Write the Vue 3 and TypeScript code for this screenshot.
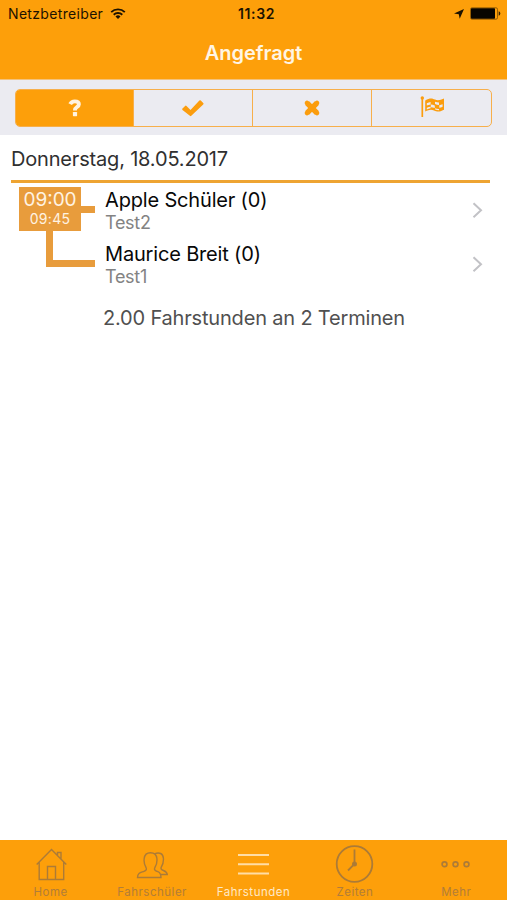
<script setup lang="ts">
interface Lesson {
  name: string
  place: string
}

const lessons: Lesson[] = [
  { name: 'Apple Schüler (0)', place: 'Test2' },
  { name: 'Maurice Breit (0)', place: 'Test1' },
]
</script>

<template>
  <div class="screen">
    <header class="top">
      <div class="status">
        <div class="carrier">
          <span class="carrier-name">Netzbetreiber</span>
          <svg class="wifi" width="16" height="12" viewBox="0 0 16 12">
            <path d="M1.2 4.1a9.8 9.8 0 0 1 13.6 0M3.7 6.7a6.3 6.3 0 0 1 8.6 0" fill="none" stroke="#1c1200" stroke-width="1.9" />
            <path d="M5.5 8.500a3.700 3.700 0 0 1 5 0L8 11.100z" fill="#1c1200" />
          </svg>
        </div>
        <span class="clock">11:32</span>
        <div class="indicators">
          <svg width="12" height="12" viewBox="0 0 12 12"><path d="M11 1 6.7 10.7 5.8 6.2 1 5.6z" fill="#1c1200" /></svg>
          <svg class="battery" width="31" height="13" viewBox="0 0 31 13">
            <rect x=".5" y=".8" width="27" height="11.4" rx="1.5" fill="none" stroke="#6b4300" stroke-width=".7" />
            <rect x="1" y="1.2" width="24" height="10.6" rx=".8" fill="#080500" />
            <path d="M28.7 4.2q1.6.5 1.6 2.3t-1.6 2.3z" fill="#3a2500" />
          </svg>
        </div>
      </div>
      <h1 class="title">Angefragt</h1>
    </header>

    <div class="filter">
      <div class="segments">
        <button class="segment active">
          <svg width="14" height="20" viewBox="0 0 14 20">
            <path d="M2.200 6.100C3 4.400 4.600 3.400 6.800 3.400c2.500 0 4.100 1.100 4.100 2.900 0 2.800-3.900 2.700-3.900 5.700v.6" fill="none" stroke="#fff3e0" stroke-width="3.900" />
            <rect x="4.900" y="14" width="4.200" height="4.200" rx=".6" fill="#fff3e0" />
          </svg>
        </button>
        <button class="segment">
          <svg width="22" height="18" viewBox="0 0 22 18"><path d="m.5 9.6 2.6-2.7q.7-.7 1.4 0l4 4L17.4 1.6q.7-.7 1.4 0l2.4 2.5q.7.7 0 1.4L9.3 16.8q-.7.7-1.4 0L.5 11q-.6-.7 0-1.4z" fill="#fb9d0e" /></svg>
        </button>
        <button class="segment">
          <svg width="18" height="18" viewBox="0 0 18 18"><path d="M4.200 4.200l9.600 9.600m0-9.600-9.600 9.600" stroke="#fb9d0e" stroke-width="5.400" /><path d="M4 4l10 10M14 4 4 14" stroke="#fb9d0e" stroke-width="4.600" stroke-linecap="round" /></svg>
        </button>
        <button class="segment">
          <svg class="flag" width="26" height="22" viewBox="0 0 26 22">
            <circle cx="2.3" cy="2" r="1.7" fill="#fb9d0e" />
            <path d="M2.3 2v19" stroke="#fb9d0e" stroke-width="1.7" />
            <path d="M5.2 4.400C10 1.800 11.600 2.100 15 3.600q3.600 1.600 9-1.100v11.200c-5 2.600-6.800 2.200-10 .7-3.200-1.400-5.200-.6-8.800 1.100z" fill="#fb9d0e" />
            <path d="M6.800 7.200q2-1.100 3.800-1.300v2.500q-2 .3-3.800 1.200zM15 5.700q2.100.8 4 .8V9q-2.100-.1-4-.9zM10.800 8.600q2 0 4 .8v2.600q-2-.7-4-.7zM19.300 9.200q1.700-.3 3.300-1v2.600q-1.600.8-3.300 1zM6.800 11.800q2-.9 3.800-1v1.500q-1.900.3-3.800 1.200zM15.100 12.200q2 .8 3.900.7v1.400q-2 0-3.900-.7z" fill="#ebebf1" />
          </svg>
        </button>
      </div>
    </div>

    <main class="content">
      <h2 class="date">Donnerstag, 18.05.2017</h2>
      <div class="slot">
        <div class="timeline">
          <div class="times">
            <span class="from">09:00</span>
            <span class="to">09:45</span>
          </div>
          <div class="branch"></div>
          <div class="elbow"></div>
        </div>
        <ul class="lessons">
          <li v-for="lesson in lessons" :key="lesson.name" class="lesson">
            <div class="info">
              <span class="name">{{ lesson.name }}</span>
              <span class="place">{{ lesson.place }}</span>
            </div>
            <svg width="12" height="18" viewBox="0 0 12 18"><path d="m1.500 2.200 7.500 7-7.500 7" fill="none" stroke="#c2c2c6" stroke-width="2" /></svg>
          </li>
        </ul>
      </div>
      <p class="summary">2.00 Fahrstunden an 2 Terminen</p>
    </main>

    <nav class="tabs">
      <a class="tab">
        <svg width="32" height="34" viewBox="0 0 32 34"><path d="M1.700 17.500 16.500 2.500l14.800 15M4.200 15v17.500h24.500V15M12.500 32.500v-13h8v13M22.500 8V5.500H26V12" /></svg>
        <span>Home</span>
      </a>
      <a class="tab">
        <svg width="32" height="34" viewBox="0 0 32 34"><path d="M1.500 30.500c0-5 3.500-5 6.500-6.200 2-.8 3-1.800 2-3.800-1.600-2.500-2.300-5-1.800-9 .4-3.600 2.200-5.800 6.300-5.800s6 2.200 6.400 5.800c.4 4-.4 6.500-2 9-1 2 0 3 2 3.800C23.400 25.500 25 26 25 30.500zM18.500 6.800c5-2 8.500-.3 8.900 4.500.3 4-.4 6-2 8.500-1 2 .1 3 2 3.700 2.600 1 3.600 1.500 3.900 4H25" /></svg>
        <span>Fahrschüler</span>
      </a>
      <a class="tab selected">
        <svg width="32" height="34" viewBox="0 0 32 34"><path d="M1 8h31M1 17.200h31M1 26.500h31" /></svg>
        <span>Fahrstunden</span>
      </a>
      <a class="tab hours">
        <svg width="40" height="40" viewBox="0 0 40 40"><circle cx="19.500" cy="20" r="17.800" /><path d="M19.500 5.500V20l-6.500 6.500" /><circle class="dot" cx="19.500" cy="20" r="1.600" /></svg>
        <span>Zeiten</span>
      </a>
      <a class="tab more">
        <svg width="32" height="34" viewBox="0 0 32 34"><circle cx="4.500" cy="17.200" r="2.400" /><circle cx="15.500" cy="17.200" r="2.400" /><circle cx="26.500" cy="17.200" r="2.400" /></svg>
        <span>Mehr</span>
      </a>
    </nav>
  </div>
</template>

<style>
body {
  margin: 0;
  background: #fff;
}
</style>

<style scoped>
.screen {
  display: flex;
  flex-direction: column;
  height: 900px;
  background: #fff;
  font-family: Inter, "Liberation Sans", sans-serif;
}
.screen svg {
  display: block;
  flex: none;
}
.top {
  box-sizing: border-box;
  height: 80px;
  background: #fd9f0a;
  border-bottom: 1px solid #f3c27c;
}
.status {
  display: grid;
  grid-template-columns: 1fr auto 1fr;
  align-items: center;
  height: 27px;
  padding: 0 6px 0 8px;
  color: #1c1200;
}
.carrier {
  display: flex;
  align-items: center;
  gap: 7px;
}
.carrier-name {
  font-size: 14px;
  letter-spacing: 0.33px;
}
.clock {
  margin-left: 4px;
  font-size: 14px;
  font-weight: 600;
  letter-spacing: 0.6px;
}
.indicators {
  display: flex;
  align-items: center;
  justify-content: flex-end;
  gap: 5px;
}
.title {
  margin: 0;
  text-align: center;
  font-size: 20px;
  font-weight: 600;
  line-height: 52px;
  color: #fff5e4;
}
.filter {
  box-sizing: border-box;
  height: 55px;
  padding: 9px 15px 8px;
  background: #ebebf1;
}
.segments {
  box-sizing: border-box;
  display: grid;
  grid-template-columns: 117px 119px 119px 1fr;
  height: 38px;
  border: 1.5px solid #f7af4b;
  border-radius: 5px;
  overflow: hidden;
}
.segment {
  display: flex;
  align-items: center;
  justify-content: center;
  padding: 0;
  border: 0;
  border-left: 1px solid #f7af4b;
  background: transparent;
}
.segment.active {
  border-left: 0;
  background: #fd9f0a;
}
.flag {
  margin: 0 0 2px 3px;
}
.content {
  flex: 1;
}
.date {
  box-sizing: border-box;
  height: 48px;
  margin: 0 17px 0 11px;
  border-bottom: 3px solid #eea432;
  font-size: 20px;
  font-weight: 400;
  line-height: 48px;
  letter-spacing: -0.18px;
  color: #303030;
}
.slot {
  display: flex;
}
.timeline {
  display: grid;
  grid-template: 44px 36px / 27px 35px 14px;
  padding: 4px 10px 0 19px;
}
.times {
  grid-column: 1 / 3;
  display: flex;
  flex-direction: column;
  align-items: center;
  background: #e89c3c;
  color: #fff3e2;
}
.from {
  font-size: 19px;
  line-height: 25px;
}
.to {
  font-size: 14px;
  line-height: 14px;
  letter-spacing: 0.3px;
}
.branch {
  height: 7px;
  margin-top: 19px;
  background: #e89c3c;
}
.elbow {
  grid-column: 2 / 4;
  border: solid #e89c3c;
  border-width: 0 0 7px 7px;
}
.lessons {
  flex: 1;
  margin: 0;
  padding: 0;
  list-style: none;
}
.lesson {
  display: flex;
  align-items: center;
  justify-content: space-between;
  height: 54px;
  padding-right: 23px;
}
.info {
  display: flex;
  flex-direction: column;
  padding-top: 2px;
}
.name {
  font-size: 20px;
  line-height: 24px;
  letter-spacing: -0.17px;
  color: #080808;
}
.place {
  font-size: 18px;
  line-height: 22px;
  letter-spacing: -0.3px;
  color: #838383;
}
.summary {
  margin: 0;
  padding-left: 103px;
  font-size: 20px;
  line-height: 54px;
  letter-spacing: -0.18px;
  color: #505050;
}
.tabs {
  display: grid;
  grid-template-columns: repeat(5, 1fr);
  height: 60px;
  background: #fd9f0a;
}
.tab {
  box-sizing: border-box;
  display: flex;
  flex-direction: column;
  align-items: center;
  justify-content: flex-end;
  padding-bottom: 1px;
  color: #b27d38;
  font-size: 11.5px;
  line-height: 14px;
  letter-spacing: 0.5px;
}
.tab svg {
  margin-bottom: 4px;
  fill: none;
  stroke: #ac7b37;
  stroke-width: 1.4;
}
.tab svg .dot {
  fill: #ac7b37;
}
.tab.selected {
  color: #ffe9c7;
}
.tab.selected svg {
  stroke: #ffdda5;
  stroke-width: 2;
}
.tab.hours svg {
  margin-bottom: 1px;
  stroke-width: 1.8;
}
.tab.more svg {
  stroke-width: 1.7;
}
</style>
